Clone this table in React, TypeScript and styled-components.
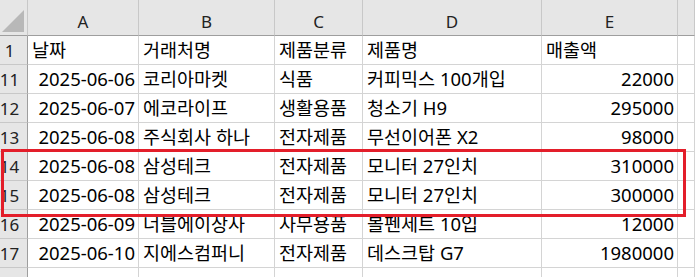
import styled, { createGlobalStyle } from "styled-components";

interface RowType {
  num: string;
  cells: string[];
  header?: boolean;
}

const columns = ["A", "B", "C", "D", "E", ""];

const rows: RowType[] = [
  { num: "1", cells: ["날짜", "거래처명", "제품분류", "제품명", "매출액"], header: true },
  { num: "11", cells: ["2025-06-06", "코리아마켓", "식품", "커피믹스 100개입", "22000"] },
  { num: "12", cells: ["2025-06-07", "에코라이프", "생활용품", "청소기 H9", "295000"] },
  { num: "13", cells: ["2025-06-08", "주식회사 하나", "전자제품", "무선이어폰 X2", "98000"] },
  { num: "14", cells: ["2025-06-08", "삼성테크", "전자제품", "모니터 27인치", "310000"] },
  { num: "15", cells: ["2025-06-08", "삼성테크", "전자제품", "모니터 27인치", "300000"] },
  { num: "16", cells: ["2025-06-09", "너블에이상사", "사무용품", "볼펜세트 10입", "12000"] },
  { num: "17", cells: ["2025-06-10", "지에스컴퍼니", "전자제품", "데스크탑 G7", "1980000"] },
  { num: "", cells: ["", "", "", "", ""] },
];

// columns A and E hold numbers / dates, right aligned outside the title row
const rightCols = [0, 4];

export default function App() {
  return (
    <>
      <GlobalStyle />
      <Sheet>
        <Grid>
          <Corner>
            <Triangle />
          </Corner>
          {columns.map((c, i) => (
            <ColHeader key={i}>{c}</ColHeader>
          ))}
          {rows.map((row, r) => (
            <Row key={r}>
              <RowHeader>{row.num}</RowHeader>
              {row.cells.map((cell, i) => (
                <Cell key={i} $right={!row.header && rightCols.includes(i)}>
                  {cell}
                </Cell>
              ))}
              <Cell />
            </Row>
          ))}
        </Grid>
        <Highlight />
      </Sheet>
    </>
  );
}

const GlobalStyle = createGlobalStyle`
  body {
    margin: 0;
    background: #fff;
    font-family: "Noto Sans", "Noto Sans CJK KR", sans-serif;
  }
`;

const Sheet = styled.div`
  position: relative;
  width: 695px;
  height: 277px;
  overflow: hidden;
`;

const Grid = styled.div`
  display: grid;
  grid-template-columns: 28px 111px 136px 88px 179px 136px 17px;
  grid-template-rows: 36px repeat(9, 29px);
`;

const Row = styled.div`
  display: contents;
`;

const Corner = styled.div`
  position: relative;
  background: #e6e6e6;
  border-right: 1px solid #c8c8c8;
  border-bottom: 1px solid #9e9e9e;
`;

const Triangle = styled.div`
  position: absolute;
  right: 3px;
  bottom: 3px;
  width: 0;
  height: 0;
  border-left: 22px solid transparent;
  border-bottom: 22px solid #b8b8b8;
`;

const ColHeader = styled.div`
  display: flex;
  align-items: center;
  justify-content: center;
  padding-top: 8px;
  background: #e6e6e6;
  border-right: 1px solid #c8c8c8;
  border-bottom: 1px solid #9e9e9e;
  font-size: 17px;
  color: #222;
`;

const RowHeader = styled.div`
  display: flex;
  align-items: flex-end;
  justify-content: center;
  padding: 0 8px 2px 0;
  background: #e6e6e6;
  border-right: 1px solid #9e9e9e;
  border-bottom: 1px solid #c8c8c8;
  font-size: 17px;
  color: #222;
`;

const Cell = styled.div<{ $right?: boolean }>`
  display: flex;
  align-items: flex-end;
  justify-content: ${(p) => (p.$right ? "flex-end" : "flex-start")};
  padding: 0 3px 1px 4px;
  border-right: 1px solid #d4d4d4;
  border-bottom: 1px solid #d4d4d4;
  font-size: 18.5px;
  color: #000;
  white-space: nowrap;
  overflow: hidden;
  line-height: 26px;
`;

const Highlight = styled.div`
  position: absolute;
  left: 1px;
  top: 149px;
  width: 685px;
  height: 68px;
  box-sizing: border-box;
  border: 3px solid #e31e2a;
  pointer-events: none;
`;
